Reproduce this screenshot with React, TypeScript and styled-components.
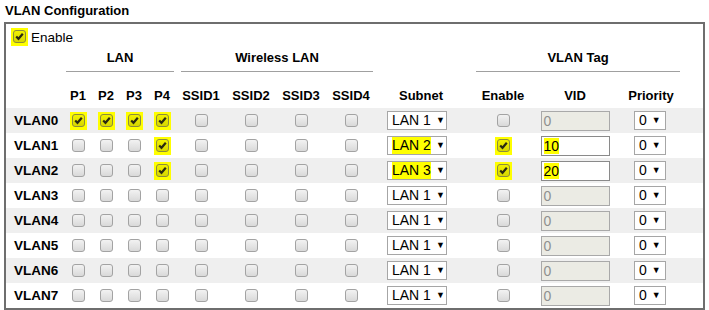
import styled, { createGlobalStyle } from 'styled-components';

const GlobalStyle = createGlobalStyle`
  body {
    margin: 0;
    background: #ffffff;
    font-family: 'Liberation Sans', Arial, sans-serif;
    font-size: 13px;
    color: #000;
  }
`;

const Title = styled.div`
  height: 22px;
  line-height: 22px;
  padding-left: 5px;
  font-size: 13px;
  font-weight: bold;
`;

const Panel = styled.div`
  margin-left: 4px;
  width: 701px;
  border: 2px solid #6e6e6e;
  box-sizing: border-box;
`;

const Table = styled.table`
  width: 697px;
  border-collapse: collapse;
  table-layout: fixed;
  font-size: 13px;
`;

const EnableCell = styled.td`
  height: 26px;
  padding: 0 0 0 5px;
  vertical-align: middle;
`;

const EnableLabel = styled.label`
  display: flex;
  align-items: center;
  gap: 3px;
  font-size: 13.5px;
`;

const GroupCell = styled.th`
  height: 23px;
  padding: 0;
  vertical-align: top;
  font-weight: bold;
`;

const GroupTitle = styled.div<{ $ml: number; $mr: number }>`
  line-height: 15px;
  padding-bottom: 6px;
  margin: 0 ${(p) => p.$mr}px 0 ${(p) => p.$ml}px;
  border-bottom: 1px solid #a0a0a0;
  text-align: center;
`;

const HeadCell = styled.th`
  height: 30px;
  padding: 0 0 5px 0;
  vertical-align: bottom;
  line-height: 15px;
  font-weight: bold;
  text-align: center;
`;

const Row = styled.tr<{ $shaded: boolean }>`
  height: 25px;
  background: ${(p) => (p.$shaded ? '#efefef' : '#ffffff')};
`;

const LabelCell = styled.td`
  padding: 0 0 0 8px;
  font-weight: bold;
  font-size: 13.5px;
  white-space: nowrap;
`;

const Cell = styled.td<{ $align?: string; $pl?: number }>`
  padding: 0 0 0 ${(p) => p.$pl ?? 0}px;
  text-align: ${(p) => p.$align ?? 'center'};
  vertical-align: middle;
  line-height: 0;
`;

const Mark = styled.span<{ $on: boolean }>`
  display: inline-block;
  padding: 2px 2px 3px 2px;
  background: ${(p) => (p.$on ? '#ffff00' : 'transparent')};
  line-height: 0;
  vertical-align: middle;
`;

const Box = styled.span<{ $on: boolean }>`
  display: inline-flex;
  align-items: center;
  justify-content: center;
  width: 13px;
  height: 13px;
  box-sizing: border-box;
  border: 1px solid ${(p) => (p.$on ? '#8c8c3c' : '#a3a3a3')};
  border-radius: 3px;
  background: ${(p) =>
    p.$on
      ? 'linear-gradient(#f2f200, #d6d600)'
      : 'linear-gradient(#f2f2f2, #d9d9d9)'};
`;

const Picker = styled.span<{ $w: number }>`
  display: inline-flex;
  align-items: center;
  gap: 5px;
  width: ${(p) => p.$w}px;
  height: 19px;
  box-sizing: border-box;
  padding: 0 3px 0 4px;
  border: 1px solid #a6a6a6;
  background: #fff;
  font-size: 14px;
  line-height: 17px;
  white-space: nowrap;
  color: #000;
  vertical-align: middle;
  overflow: hidden;
`;

const Arrow = styled.span`
  flex-shrink: 0;
  font-size: 9px;
  line-height: 17px;
`;

const Hi = styled.span<{ $on: boolean }>`
  flex-shrink: 0;
  background: ${(p) => (p.$on ? '#ffff00' : 'transparent')};
`;

const Vid = styled.span<{ $off: boolean }>`
  display: inline-block;
  width: 69px;
  height: 20px;
  box-sizing: border-box;
  padding-left: 2px;
  border: 1px solid ${(p) => (p.$off ? '#a9a9a9' : '#8a8a8a')};
  background: ${(p) => (p.$off ? '#ebebe4' : '#ffffff')};
  color: ${(p) => (p.$off ? '#8f8f8f' : '#000')};
  font-size: 14px;
  line-height: 18px;
  text-align: left;
  white-space: nowrap;
  vertical-align: middle;
`;

const Check = ({ on }: { on: boolean }) => (
  <Mark $on={on}>
    <Box $on={on}>
      {on && (
        <svg width="9" height="9" viewBox="0 0 9 9">
          <path d="M1.2 4.4 L3.5 6.8 L7.8 1.8" stroke="#2a2a10" strokeWidth="2.2" fill="none" />
        </svg>
      )}
    </Box>
  </Mark>
);

type Vlan = {
  name: string;
  ports: boolean[];
  ssid: boolean[];
  subnet: string;
  tag: boolean;
  vid: string;
};

const vlans: Vlan[] = Array.from({ length: 8 }, (_, i) => ({
  name: `VLAN${i}`,
  ports: [false, false, false, false],
  ssid: [false, false, false, false],
  subnet: 'LAN 1',
  tag: false,
  vid: '0',
}));
vlans[0].ports = [true, true, true, true];
vlans[1].ports = [false, false, false, true];
vlans[1].subnet = 'LAN 2';
vlans[1].tag = true;
vlans[1].vid = '10';
vlans[2].ports = [false, false, false, true];
vlans[2].subnet = 'LAN 3';
vlans[2].tag = true;
vlans[2].vid = '20';

const headers = ['P1', 'P2', 'P3', 'P4', 'SSID1', 'SSID2', 'SSID3', 'SSID4', 'Subnet', 'Enable', 'VID', 'Priority'];
const widths = [58, 28, 28, 28, 28, 50, 50, 50, 50, 90, 74, 70, 82, 11];

export default function App() {
  return (
    <>
      <GlobalStyle />
      <Title>VLAN Configuration</Title>
      <Panel>
        <Table>
          <colgroup>
            {widths.map((w, i) => (
              <col key={i} style={{ width: w }} />
            ))}
          </colgroup>
          <tbody>
            <tr>
              <EnableCell colSpan={14}>
                <EnableLabel>
                  <Check on />
                  Enable
                </EnableLabel>
              </EnableCell>
            </tr>
            <tr>
              <th />
              <GroupCell colSpan={4}>
                <GroupTitle $ml={2} $mr={2}>LAN</GroupTitle>
              </GroupCell>
              <GroupCell colSpan={4}>
                <GroupTitle $ml={5} $mr={3}>Wireless LAN</GroupTitle>
              </GroupCell>
              <th />
              <GroupCell colSpan={3}>
                <GroupTitle $ml={10} $mr={12}>VLAN Tag</GroupTitle>
              </GroupCell>
              <th />
            </tr>
            <tr>
              <th />
              {headers.map((h) => (
                <HeadCell key={h}>{h}</HeadCell>
              ))}
              <th />
            </tr>
            {vlans.map((v, i) => (
              <Row key={v.name} $shaded={i % 2 === 0}>
                <LabelCell>{v.name}</LabelCell>
                {v.ports.map((p, j) => (
                  <Cell key={`p${j}`}>
                    <Check on={p} />
                  </Cell>
                ))}
                {v.ssid.map((s, j) => (
                  <Cell key={`s${j}`}>
                    <Check on={s} />
                  </Cell>
                ))}
                <Cell $align="left" $pl={11}>
                  <Picker $w={60}>
                    <Hi $on={v.subnet !== 'LAN 1'}>{v.subnet}</Hi>
                    <Arrow>▼</Arrow>
                  </Picker>
                </Cell>
                <Cell>
                  <Check on={v.tag} />
                </Cell>
                <Cell>
                  <Vid $off={!v.tag}>
                    <Hi $on={v.tag}>{v.vid}</Hi>
                  </Vid>
                </Cell>
                <Cell $align="left" $pl={24}>
                  <Picker $w={32}>
                    0<Arrow>▼</Arrow>
                  </Picker>
                </Cell>
                <Cell />
              </Row>
            ))}
          </tbody>
        </Table>
      </Panel>
    </>
  );
}
